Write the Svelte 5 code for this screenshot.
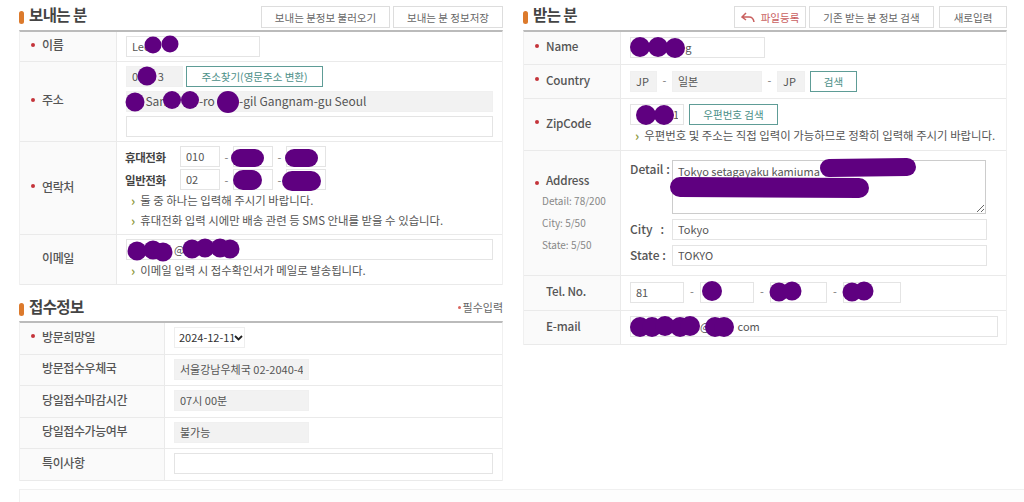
<script>
	const blobs = [
		[153, 45, 8.5], [170, 44, 8.5], [147, 76, 9.5], [135, 102, 9.5], [172, 100, 9], [190, 100, 9], [228, 102, 11],
		[137, 251, 9.5], [153, 250, 9.5], [163, 252, 9.5], [192, 249, 9.5], [205, 248, 9.5], [220, 248, 9.5], [230, 249, 9.5],
		[640, 47, 10], [658, 47, 10], [675, 48, 10], [646, 115, 10], [664, 115, 10],
		[712, 291, 10], [779, 292, 9.5], [792, 291, 9.5], [852, 292, 9.5], [864, 291, 9.5],
		[640, 327, 10], [652, 327, 10], [665, 326, 10], [680, 327, 10], [690, 326, 10], [715, 327, 10], [724, 327, 10]
	];
	const scribbles = [
		[240, 158, 255, 158, 18], [294, 158, 309, 158, 18], [243, 180, 252, 180, 20], [292, 181, 311, 181, 20],
		[829, 168, 907, 167, 18], [680, 187, 859, 188, 20]
	];
</script>

<div class="page">
	<div class="cols">
		<div class="col">
			<section>
				<header class="head">
					<h2>보내는 분</h2>
					<div class="actions">
						<button class="btn w129">보내는 분정보 불러오기</button>
						<button class="btn w110">보내는 분 정보저장</button>
					</div>
				</header>
				<div class="table">
					<div class="row">
						<div class="th"><i class="star"></i>이름</div>
						<div class="td"><input class="w134" value="Lee" /></div>
					</div>
					<div class="row">
						<div class="th"><i class="star"></i>주소</div>
						<div class="td stack">
							<div class="line">
								<input class="w57 ro" value="0        3" />
								<button class="btn teal w137">주소찾기(영문주소 변환)</button>
							</div>
							<input class="ro big" value="     San            -ro         -gil Gangnam-gu Seoul" />
							<input />
						</div>
					</div>
					<div class="row">
						<div class="th"><i class="star"></i>연락처</div>
						<div class="td">
							<div class="phones">
								<div class="line tight"><b class="ph">휴대전화</b><input class="w40" value="010" /><span class="dash">-</span><input class="w40" /><span class="dash">-</span><input class="w40" /></div>
								<div class="line tight"><b class="ph">일반전화</b><input class="w40" value="02" /><span class="dash">-</span><input class="w40" /><span class="dash">-</span><input class="w40" /></div>
							</div>
							<p class="note">둘 중 하나는 입력해 주시기 바랍니다.</p>
							<p class="note">휴대전화 입력 시에만 배송 관련 등 SMS 안내를 받을 수 있습니다.</p>
						</div>
					</div>
					<div class="row">
						<div class="th plain">이메일</div>
						<div class="td">
							<input value="                 @" />
							<p class="note">이메일 입력 시 접수확인서가 메일로 발송됩니다.</p>
						</div>
					</div>
				</div>
			</section>

			<section class="receipt">
				<header class="head second">
					<h2>접수정보</h2>
					<span class="req"><i class="star small"></i>필수입력</span>
				</header>
				<div class="table wide">
					<div class="row">
						<div class="th"><i class="star"></i>방문희망일</div>
						<div class="td">
							<div class="select">
								<select class="date"><option>2024-12-11</option></select>
								<svg width="9" height="6" viewBox="0 0 9 6" fill="none" stroke="#222" stroke-width="1.800">
									<path d="M1 1l3.500 3.500L8 1" />
								</svg>
							</div>
						</div>
					</div>
					<div class="row">
						<div class="th plain">방문접수우체국</div>
						<div class="td"><input class="w135 ro" value="서울강남우체국 02-2040-4" /></div>
					</div>
					<div class="row">
						<div class="th plain">당일접수마감시간</div>
						<div class="td"><input class="w135 ro" value="07시 00분" /></div>
					</div>
					<div class="row">
						<div class="th plain">당일접수가능여부</div>
						<div class="td"><input class="w135 ro" value="불가능" /></div>
					</div>
					<div class="row">
						<div class="th plain">특이사항</div>
						<div class="td"><input /></div>
					</div>
				</div>
			</section>
		</div>

		<div class="col">
			<section>
				<header class="head">
					<h2>받는 분</h2>
					<div class="actions">
						<button class="btn red w72">
							<svg width="15" height="11" viewBox="0 0 15 11" fill="none" stroke="#c9605f" stroke-width="1.5">
								<path d="M5 1 1 5l4 3M1.500 5H8c3 0 4.500 1.500 5 5" />
							</svg>
							파일등록
						</button>
						<button class="btn w125">기존 받는 분 정보 검색</button>
						<button class="btn w68">새로입력</button>
					</div>
				</header>
				<div class="table recv">
					<div class="row r33">
						<div class="th en"><i class="star"></i>Name</div>
						<div class="td"><input class="w135" value="                    g" /></div>
					</div>
					<div class="row r34">
						<div class="th en"><i class="star"></i>Country</div>
						<div class="td line">
							<input class="w27 ro" value="JP" /><span class="dash">-</span><input class="w90 ro" value="일본" /><span class="dash">-</span><input class="w28 ro" value="JP" />
							<button class="btn teal w47">검색</button>
						</div>
					</div>
					<div class="row r52">
						<div class="th en"><i class="star"></i>ZipCode</div>
						<div class="td">
							<div class="line">
								<input class="w54" value="               1" />
								<button class="btn teal w89">우편번호 검색</button>
							</div>
							<p class="note">우편번호 및 주소는 직접 입력이 가능하므로 정확히 입력해 주시기 바랍니다.</p>
						</div>
					</div>
					<div class="row r125">
						<div class="th en addr">
							<div><i class="star"></i>Address</div>
							<small>Detail: 78/200</small>
							<small>City: 5/50</small>
							<small>State: 5/50</small>
						</div>
						<div class="td fields">
							<div class="field top">
								<label for="detail">Detail :</label>
								<textarea id="detail">Tokyo setagayaku kamiuma</textarea>
							</div>
							<div class="field">
								<label for="city">City&nbsp;&nbsp;&nbsp;:</label>
								<input id="city" value="Tokyo" />
							</div>
							<div class="field">
								<label for="state">State :</label>
								<input id="state" value="TOKYO" />
							</div>
						</div>
					</div>
					<div class="row r35">
						<div class="th en plain">Tel. No.</div>
						<div class="td line">
							<input class="w54" value="81" /><span class="dash wide-dash">-</span><input class="w54" /><span class="dash wide-dash">-</span><input class="w57" /><span class="dash wide-dash">-</span><input class="w58" />
						</div>
					</div>
					<div class="row r34">
						<div class="th en plain">E-mail</div>
						<div class="td"><input class="w368" value="                          @           com" /></div>
					</div>
				</div>
			</section>
		</div>
	</div>

	<div class="bottom"></div>

	<!-- redaction marks painted over the form -->
	<svg class="marks" width="1024" height="502" viewBox="0 0 1024 502">
		{#each blobs as [cx, cy, r]}
			<circle {cx} {cy} {r} />
		{/each}
		{#each scribbles as [x1, y1, x2, y2, w]}
			<line {x1} {y1} {x2} {y2} stroke-width={w} />
		{/each}
	</svg>
</div>

<style>
	:global(body) {
		margin: 0;
		background: #fff;
	}
	.page {
		position: relative;
		width: 1024px;
		height: 502px;
		overflow: hidden;
		font-family: 'Noto Sans CJK KR', 'Noto Sans', sans-serif;
		font-size: 11.5px;
		color: #555;
	}
	.cols {
		display: flex;
		gap: 20px;
		padding-left: 19px;
	}
	.col {
		width: 484px;
		flex: none;
	}
	.head {
		display: flex;
		align-items: flex-start;
		justify-content: space-between;
		height: 30px;
		padding-top: 6px;
		box-sizing: border-box;
	}
	.head.second {
		height: 36px;
		padding-top: 13px;
	}
	h2 {
		display: flex;
		align-items: center;
		gap: 5px;
		margin: -3px 0 0;
		font-size: 15.5px;
		font-weight: 700;
		letter-spacing: -0.6px;
		color: #444;
	}
	h2::before {
		content: '';
		width: 5px;
		height: 13px;
		margin-top: 7px;
		border-radius: 3px;
		background: #dc7a2c;
	}
	.actions {
		display: flex;
		gap: 3px;
	}
	.btn {
		display: flex;
		align-items: center;
		justify-content: center;
		gap: 5px;
		box-sizing: border-box;
		height: 21px;
		padding: 0;
		background: #fff;
		border: 1px solid #ddd;
		font: inherit;
		font-size: 10.5px;
		color: #666;
	}
	.actions .btn {
		height: 22px;
	}
	.btn.teal {
		border-color: #5e9c96;
		color: #4b8f88;
		font-size: 10.5px;
	}
	.btn.red {
		color: #c9605f;
	}
	.w129 { width: 129px; }
	.w110 { width: 110px; }
	.w137 { width: 137px; }
	.w72 { width: 72px; }
	.w125 { width: 125px; }
	.w68 { width: 68px; margin-left: 2px; }
	.w47 { width: 47px; margin-left: 2px; }
	.w89 { width: 89px; margin-left: 2px; }

	.table {
		border-top: 2px solid #bbb;
		border-left: 1px solid #f0f0f0;
		border-right: 1px solid #f0f0f0;
	}
	.row {
		display: grid;
		grid-template-columns: 97px 1fr;
		border-bottom: 1px solid #eaeaea;
	}
	.wide .row {
		grid-template-columns: 145px 1fr;
		height: 31.5px;
		box-sizing: border-box;
		align-items: stretch;
	}
	.wide .td {
		padding: 4px 9px;
	}
	.th {
		display: flex;
		align-items: center;
		padding: 0 0 4px 11px;
		background: #fafafa;
		border-right: 1px solid #eaeaea;
		font-size: 12px;
		font-weight: 500;
		color: #555;
		letter-spacing: -0.4px;
	}
	.th.plain {
		padding-left: 22px;
	}
	.star {
		flex: none;
		display: inline-block;
		width: 4px;
		height: 4px;
		margin-right: 7px;
		border-radius: 50%;
		background: #c4343a;
	}
	.star.small {
		margin-right: 2px;
		width: 3px;
		height: 3px;
		background: #d9665e;
	}
	.td {
		padding: 4px 9px;
		min-width: 0;
	}
	.stack {
		display: flex;
		flex-direction: column;
		gap: 4px;
	}
	.line {
		display: flex;
		align-items: center;
		gap: 3px;
	}
	.line.tight {
		gap: 0;
	}
	.phones {
		display: flex;
		flex-direction: column;
		gap: 2px;
	}
	.ph {
		width: 55px;
		margin-left: -1px;
		font-size: 11.5px;
		font-weight: 700;
		color: #444;
		letter-spacing: -0.4px;
	}
	input,
	textarea,
	select {
		display: block;
		box-sizing: border-box;
		width: 100%;
		height: 21px;
		margin: 0;
		padding: 0 5px 1px;
		border: 1px solid #e4e4e4;
		background: #fff;
		font: inherit;
		font-size: 11px;
		color: #555;
		outline: none;
	}
	input.ro {
		background: #f2f2f2;
		border-color: #f0f0f0;
	}
	input.big {
		font-size: 12px;
		padding-bottom: 3px;
	}
	.w27 { width: 27px; }
	.w28 { width: 28px; }
	.w40 { width: 40px; flex: none; }
	.w54 { width: 54px; flex: none; }
	.w57 { width: 57px; flex: none; }
	.w58 { width: 58px; flex: none; }
	.w90 { width: 90px; }
	.w134 { width: 134px; }
	.w135 { width: 135px; }
	.w368 { width: 368px; }
	.dash {
		width: 13px;
		text-align: center;
		flex: none;
		color: #777;
		font-size: 11px;
	}
	.line:not(.tight) .dash {
		width: 9px;
	}
	.line .dash.wide-dash {
		width: 10px;
	}
	.note {
		display: flex;
		align-items: center;
		height: 20px;
		margin: 0;
		padding-left: 5px;
		font-size: 11.4px;
		color: #555;
	}
	.note::before {
		content: '›';
		margin-right: 5px;
		font-weight: 700;
		font-size: 13px;
		line-height: 1;
		color: #8f9a3c;
	}
	.receipt .req {
		display: flex;
		align-items: center;
		margin-top: 1px;
		font-size: 11px;
		color: #666;
	}
	.select {
		position: relative;
		width: 71px;
	}
	.select svg {
		position: absolute;
		right: 2px;
		top: 8px;
		pointer-events: none;
	}
	.date {
		appearance: none;
		padding: 0 0 1px 4px;
		border-color: #eee;
		font-size: 11px;
		color: #333;
	}
	.recv .row {
		box-sizing: border-box;
	}
	.r33 { height: 33px; }
	.r34 { height: 34px; }
	.r35 { height: 35px; }
	.r52 { height: 52px; }
	.r125 { height: 125px; }
	.recv .td {
		padding: 5px 9px;
	}
	.recv .td.line {
		padding-top: 6px;
		align-items: flex-start;
	}
	.recv .dash {
		line-height: 19px;
	}
	.th.en {
		font-size: 11.7px;
		padding-bottom: 5px;
		font-weight: 500;
		letter-spacing: -0.2px;
	}
	.th.en.addr {
		flex-direction: column;
		align-items: flex-start;
		justify-content: flex-start;
		padding-top: 20px;
		padding-bottom: 0;
		box-sizing: border-box;
	}
	.addr small {
		margin: 4px 0 0 7px;
		height: 18px;
		line-height: 18px;
		font-size: 10px;
		font-weight: 400;
		letter-spacing: 0;
		color: #888;
	}
	.recv .td.fields {
		display: flex;
		flex-direction: column;
		gap: 5px;
		padding-top: 9px;
	}
	.field {
		display: flex;
		align-items: center;
		width: 357px;
	}
	.field.top {
		align-items: flex-start;
	}
	.field label {
		width: 42px;
		flex: none;
		padding-bottom: 3px;
		font-size: 12px;
		font-weight: 500;
		color: #555;
		white-space: nowrap;
	}
	.field.top label {
		padding-bottom: 0;
	}
	.field input {
		width: 315px;
		padding-left: 5px;
	}
	textarea {
		width: 314px;
		height: 54px;
		padding: 2px 5px;
		border-color: #ccc;
		resize: both;
	}
	.bottom {
		position: absolute;
		left: 19px;
		top: 489px;
		width: 1005px;
		height: 13px;
		box-sizing: border-box;
		border: 1px solid #f0f0f0;
		border-bottom: none;
		border-right: none;
		background: #fdfdfd;
	}
	.marks {
		position: absolute;
		left: 0;
		top: 0;
		pointer-events: none;
	}
	.marks circle {
		fill: #5f0080;
	}
	.marks line {
		stroke: #5f0080;
		stroke-linecap: round;
	}
</style>
